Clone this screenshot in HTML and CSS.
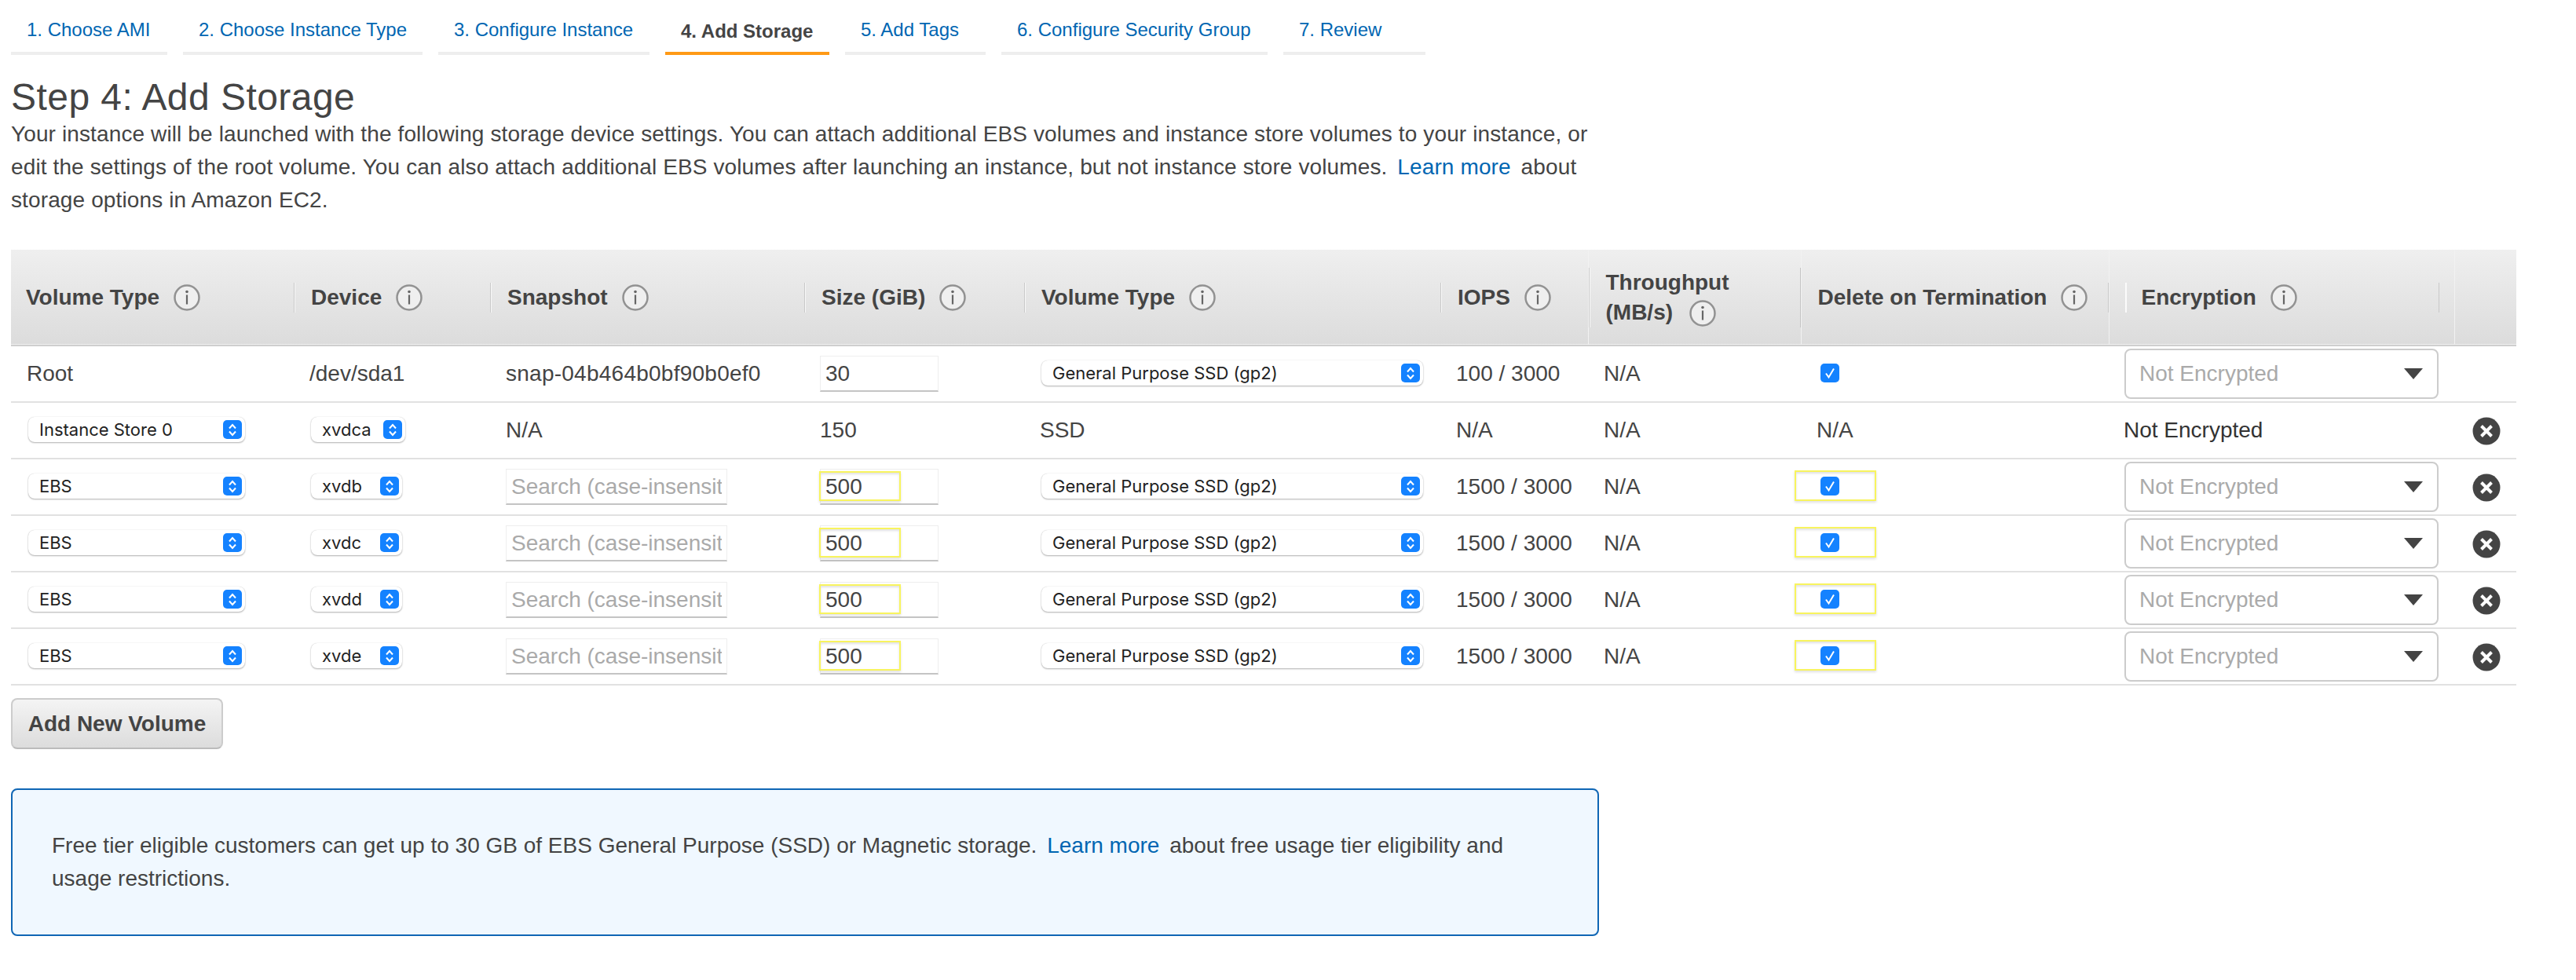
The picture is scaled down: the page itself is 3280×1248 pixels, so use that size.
FILE: index.html
```html
<!DOCTYPE html>
<html lang="en">
<head>
    <meta charset="UTF-8">
    <title>Step 4: Add Storage</title>
    <link rel="stylesheet" href="styles.css">
</head>
<body>

    <svg class="sprites" width="0" height="0">
        <symbol id="i-info" viewBox="0 0 34 34">
            <circle cx="17" cy="17" r="15.5" fill="#efefef" stroke="#929292" stroke-width="2.5"/>
            <circle cx="17" cy="9.5" r="1.8" fill="#666"/>
            <rect x="15.9" y="13.5" width="2.2" height="12" fill="#666"/>
        </symbol>
        <symbol id="i-step" viewBox="0 0 24 24">
            <rect width="24" height="24" rx="5" fill="#1482ff"/>
            <path d="M8 10.500 12 6 16 10.500M8 14.500 12 19 16 14.500" fill="none" stroke="#fff" stroke-width="2"/>
        </symbol>
        <symbol id="i-check" viewBox="0 0 24 24">
            <rect width="24" height="24" rx="5" fill="#1482ff"/>
            <path d="M7 12.500 10.500 17.500 17 6.500" fill="none" stroke="#fff" stroke-width="2"/>
        </symbol>
        <symbol id="i-remove" viewBox="0 0 36 36">
            <circle cx="18" cy="18" r="17.500" fill="#444"/>
            <path d="M11.500 11.500 24.500 24.500M24.500 11.500 11.500 24.500" stroke="#fff" stroke-width="4"/>
        </symbol>
    </svg>

    <nav class="tabs">
        <a class="tab">1. Choose AMI</a>
        <a class="tab">2. Choose Instance Type</a>
        <a class="tab">3. Configure Instance</a>
        <a class="tab active">4. Add Storage</a>
        <a class="tab">5. Add Tags</a>
        <a class="tab">6. Configure Security Group</a>
        <a class="tab">7. Review</a>
    </nav>

    <main class="page">
        <h1>Step 4: Add Storage</h1>
        <p class="intro">Your instance will be launched with the following storage device settings. You can attach additional EBS volumes and instance store volumes to your instance, or edit the settings of the root volume. You can also attach additional EBS volumes after launching an instance, but not instance store volumes. <a class="link">Learn more</a> about storage options in Amazon EC2.</p>

        <table class="volumes">
            <colgroup>
                <col class="c1"><col class="c2"><col class="c3"><col class="c4"><col class="c5"><col class="c6"><col class="c7"><col class="c8"><col class="c9"><col class="c10">
            </colgroup>
            <thead>
                <tr>
                    <th><div class="th-in first">Volume Type <svg class="info"><use href="#i-info"/></svg></div></th>
                    <th><div class="th-in">Device <svg class="info"><use href="#i-info"/></svg></div></th>
                    <th><div class="th-in">Snapshot <svg class="info"><use href="#i-info"/></svg></div></th>
                    <th><div class="th-in">Size (GiB) <svg class="info"><use href="#i-info"/></svg></div></th>
                    <th><div class="th-in">Volume Type <svg class="info"><use href="#i-info"/></svg></div></th>
                    <th><div class="th-in">IOPS <svg class="info"><use href="#i-info"/></svg></div></th>
                    <th class="faint"><div class="th-in tall"><span>Throughput<br>(MB/s) <svg class="info"><use href="#i-info"/></svg></span></div></th>
                    <th class="faint"><div class="th-in right">Delete on Termination <svg class="info"><use href="#i-info"/></svg></div></th>
                    <th class="faint enc"><div class="th-in right">Encryption <svg class="info"><use href="#i-info"/></svg></div></th>
                    <th class="faint"></th>
                </tr>
            </thead>
            <tbody>
                <tr>
                    <td>Root</td>
                    <td>/dev/sda1</td>
                    <td class="snap">snap-04b464b0bf90b0ef0</td>
                    <td><input class="num" value="30"></td>
                    <td><div class="sel wide">General Purpose SSD (gp2)<svg class="step"><use href="#i-step"/></svg></div></td>
                    <td>100 / 3000</td>
                    <td>N/A</td>
                    <td><div class="mark tick"><svg class="check"><use href="#i-check"/></svg></div></td>
                    <td><div class="enc-sel">Not Encrypted<span class="tri"></span></div></td>
                    <td></td>
                </tr>
                <tr>
                    <td><div class="sel type">Instance Store 0<svg class="step"><use href="#i-step"/></svg></div></td>
                    <td><div class="sel dev">xvdca<svg class="step"><use href="#i-step"/></svg></div></td>
                    <td>N/A</td>
                    <td>150</td>
                    <td>SSD</td>
                    <td>N/A</td>
                    <td>N/A</td>
                    <td>N/A</td>
                    <td class="dark">Not Encrypted</td>
                    <td><svg class="remove"><use href="#i-remove"/></svg></td>
                </tr>
                <tr>
                    <td><div class="sel type">EBS<svg class="step"><use href="#i-step"/></svg></div></td>
                    <td><div class="sel dev short">xvdb<svg class="step"><use href="#i-step"/></svg></div></td>
                    <td><input class="search" placeholder="Search (case-insensitive)"></td>
                    <td><div class="mark"><input class="num dark" value="500"><span class="hl"></span></div></td>
                    <td><div class="sel wide">General Purpose SSD (gp2)<svg class="step"><use href="#i-step"/></svg></div></td>
                    <td>1500 / 3000</td>
                    <td>N/A</td>
                    <td><div class="mark tick"><svg class="check"><use href="#i-check"/></svg><span class="hl"></span></div></td>
                    <td><div class="enc-sel">Not Encrypted<span class="tri"></span></div></td>
                    <td><svg class="remove"><use href="#i-remove"/></svg></td>
                </tr>
                <tr>
                    <td><div class="sel type">EBS<svg class="step"><use href="#i-step"/></svg></div></td>
                    <td><div class="sel dev short">xvdc<svg class="step"><use href="#i-step"/></svg></div></td>
                    <td><input class="search" placeholder="Search (case-insensitive)"></td>
                    <td><div class="mark"><input class="num dark" value="500"><span class="hl"></span></div></td>
                    <td><div class="sel wide">General Purpose SSD (gp2)<svg class="step"><use href="#i-step"/></svg></div></td>
                    <td>1500 / 3000</td>
                    <td>N/A</td>
                    <td><div class="mark tick"><svg class="check"><use href="#i-check"/></svg><span class="hl"></span></div></td>
                    <td><div class="enc-sel">Not Encrypted<span class="tri"></span></div></td>
                    <td><svg class="remove"><use href="#i-remove"/></svg></td>
                </tr>
                <tr>
                    <td><div class="sel type">EBS<svg class="step"><use href="#i-step"/></svg></div></td>
                    <td><div class="sel dev short">xvdd<svg class="step"><use href="#i-step"/></svg></div></td>
                    <td><input class="search" placeholder="Search (case-insensitive)"></td>
                    <td><div class="mark"><input class="num dark" value="500"><span class="hl"></span></div></td>
                    <td><div class="sel wide">General Purpose SSD (gp2)<svg class="step"><use href="#i-step"/></svg></div></td>
                    <td>1500 / 3000</td>
                    <td>N/A</td>
                    <td><div class="mark tick"><svg class="check"><use href="#i-check"/></svg><span class="hl"></span></div></td>
                    <td><div class="enc-sel">Not Encrypted<span class="tri"></span></div></td>
                    <td><svg class="remove"><use href="#i-remove"/></svg></td>
                </tr>
                <tr>
                    <td><div class="sel type">EBS<svg class="step"><use href="#i-step"/></svg></div></td>
                    <td><div class="sel dev short">xvde<svg class="step"><use href="#i-step"/></svg></div></td>
                    <td><input class="search" placeholder="Search (case-insensitive)"></td>
                    <td><div class="mark"><input class="num dark" value="500"><span class="hl"></span></div></td>
                    <td><div class="sel wide">General Purpose SSD (gp2)<svg class="step"><use href="#i-step"/></svg></div></td>
                    <td>1500 / 3000</td>
                    <td>N/A</td>
                    <td><div class="mark tick"><svg class="check"><use href="#i-check"/></svg><span class="hl"></span></div></td>
                    <td><div class="enc-sel">Not Encrypted<span class="tri"></span></div></td>
                    <td><svg class="remove"><use href="#i-remove"/></svg></td>
                </tr>
            </tbody>
        </table>

        <button class="add">Add New Volume</button>

        <div class="notice">Free tier eligible customers can get up to 30 GB of EBS General Purpose (SSD) or Magnetic storage. <a class="link">Learn more</a> about free usage tier eligibility and usage restrictions.</div>
    </main>

</body>
</html>
```

FILE: styles.css
```css
body { margin: 0; background: #fff; color: #444; font-family: "Liberation Sans", Arial, sans-serif; font-size: 28px; line-height: 42px; }
.sprites { display: block; height: 0; }

.tabs { display: flex; gap: 20px; padding-left: 14px; }
.tab { box-sizing: border-box; padding: 20px 0 10px 20px; line-height: 36px; font-size: 24px; color: #0066b2; border-bottom: 4px solid #eee; }
.tab:nth-child(1) { width: 199px; }
.tab:nth-child(2) { width: 305px; }
.tab:nth-child(3) { width: 269px; }
.tab:nth-child(4) { width: 209px; }
.tab:nth-child(5) { width: 179px; }
.tab:nth-child(6) { width: 339px; }
.tab:nth-child(7) { width: 181px; }
.tab.active { padding-top: 22px; padding-bottom: 8px; color: #444; font-weight: bold; border-bottom-color: #ff9a16; }

.page { padding-left: 14px; }
h1 { margin: 28px 0 0; font-size: 48px; line-height: 52px; font-weight: normal; letter-spacing: .45px; color: #444; }
.intro { width: 2030px; margin: 0 0 42px; letter-spacing: .12px; }
.link { color: #0066b2; margin: 0 5px; }

.volumes { width: 3190px; table-layout: fixed; border-collapse: collapse; }
.c1 { width: 360px; }
.c2 { width: 250px; }
.c3 { width: 400px; }
.c4 { width: 280px; }
.c5 { width: 530px; }
.c6 { width: 188px; }
.c7 { width: 271px; }
.c8 { width: 392px; }
.c9 { width: 440px; }
.c10 { width: 79px; }

.volumes thead tr { height: 122px; background: linear-gradient(#efefef, #dcdcdc); border-bottom: 2px solid #cfcfcf; }
.volumes th { padding: 0; text-align: left; font-size: 28px; line-height: 42px; color: #444; }
.volumes th.faint { border-left: 1px solid #f2f2f2; }
.th-in { display: flex; align-items: center; gap: 18px; height: 38px; padding-left: 21px; border-left: 1px solid #c9c9c9; box-shadow: inset 1px 0 #f8f8f8; }
.th-in.first { border-left: 0; padding-left: 19px; box-shadow: none; }
.th-in.tall { height: 76px; border-right: 1px solid #c4c4c4; line-height: 38px; }
.th-in.tall .info { margin-left: 13px; }
.th-in.right { border-left: 0; border-right: 1px solid #c9c9c9; box-shadow: none; }
.enc .th-in { margin-left: 20px; margin-right: 19px; padding-left: 19px; border-left: 2px solid #fbfbfb; }
.info { width: 34px; height: 34px; vertical-align: middle; }

.volumes tbody tr { height: 72px; border-bottom: 2px solid #e1e1e1; }
.volumes td { padding: 0 20px; white-space: nowrap; color: #444; }
.volumes td.dark { padding-left: 19px; color: #333; }
.volumes td.snap { letter-spacing: .25px; }

.sel { display: flex; align-items: center; justify-content: space-between; box-sizing: border-box; height: 32px; margin-bottom: 2px; padding: 0 4px 0 14px; border-radius: 8px; background: #fff; box-shadow: 0 1px 2px rgba(0,0,0,.3), 0 0 1px rgba(0,0,0,.2); font-family: Inter, "Noto Sans", sans-serif; font-size: 22px; line-height: 32px; color: #222; }
.sel.type { width: 276px; margin-left: 2px; }
.sel.dev { width: 120px; margin-left: 2px; }
.sel.dev.short { width: 116px; }
.sel.wide { width: 486px; margin-left: 2px; }
.step { flex: none; width: 24px; height: 24px; }

.num, .search { display: block; box-sizing: border-box; height: 46px; margin: 0; padding: 0 6px; border: 1px solid #eee; border-bottom: 2px solid #c4c4c4; border-radius: 0; outline: 0; background: #fff; font: 28px "Liberation Sans", Arial, sans-serif; color: #444; }
.num { width: 151px; }
.search { width: 282px; }
.search::placeholder { color: #aaa; opacity: 1; }

.mark { position: relative; width: 151px; }
.mark.tick { width: 24px; height: 24px; margin: 0 0 2px 5px; }
.hl { position: absolute; left: -1px; top: 3px; box-sizing: border-box; width: 104px; height: 38px; border: 2px solid #f8f45e; box-shadow: inset 0 2px 3px rgba(0,0,0,.12), 0 2px 3px rgba(0,0,0,.12); pointer-events: none; }
.tick .hl { left: -33px; top: -8px; height: 39px; }
.check { display: block; width: 24px; height: 24px; }

.enc-sel { display: flex; align-items: center; justify-content: space-between; box-sizing: border-box; width: 400px; height: 64px; padding: 0 18px 0 17px; border: 2px solid #ccc; border-radius: 8px; color: #aaa; }
.tri { width: 0; height: 0; border-left: 12px solid transparent; border-right: 12px solid transparent; border-top: 14px solid #444; }
.remove { display: block; width: 36px; height: 36px; margin: 2px 0 0 3px; }

.add { display: block; box-sizing: border-box; width: 270px; height: 65px; margin: 16px 0 0; padding: 0; border: 2px solid #ccc; border-bottom-color: #bbb; border-radius: 8px; background: linear-gradient(#f4f4f4, #dcdcdc); font: bold 28px "Liberation Sans", Arial, sans-serif; color: #444; }

.notice { box-sizing: border-box; width: 2022px; margin-top: 50px; padding: 50px 50px; border: 2px solid #0f66b5; border-radius: 8px; background: #f0f8ff; color: #444; }
```
